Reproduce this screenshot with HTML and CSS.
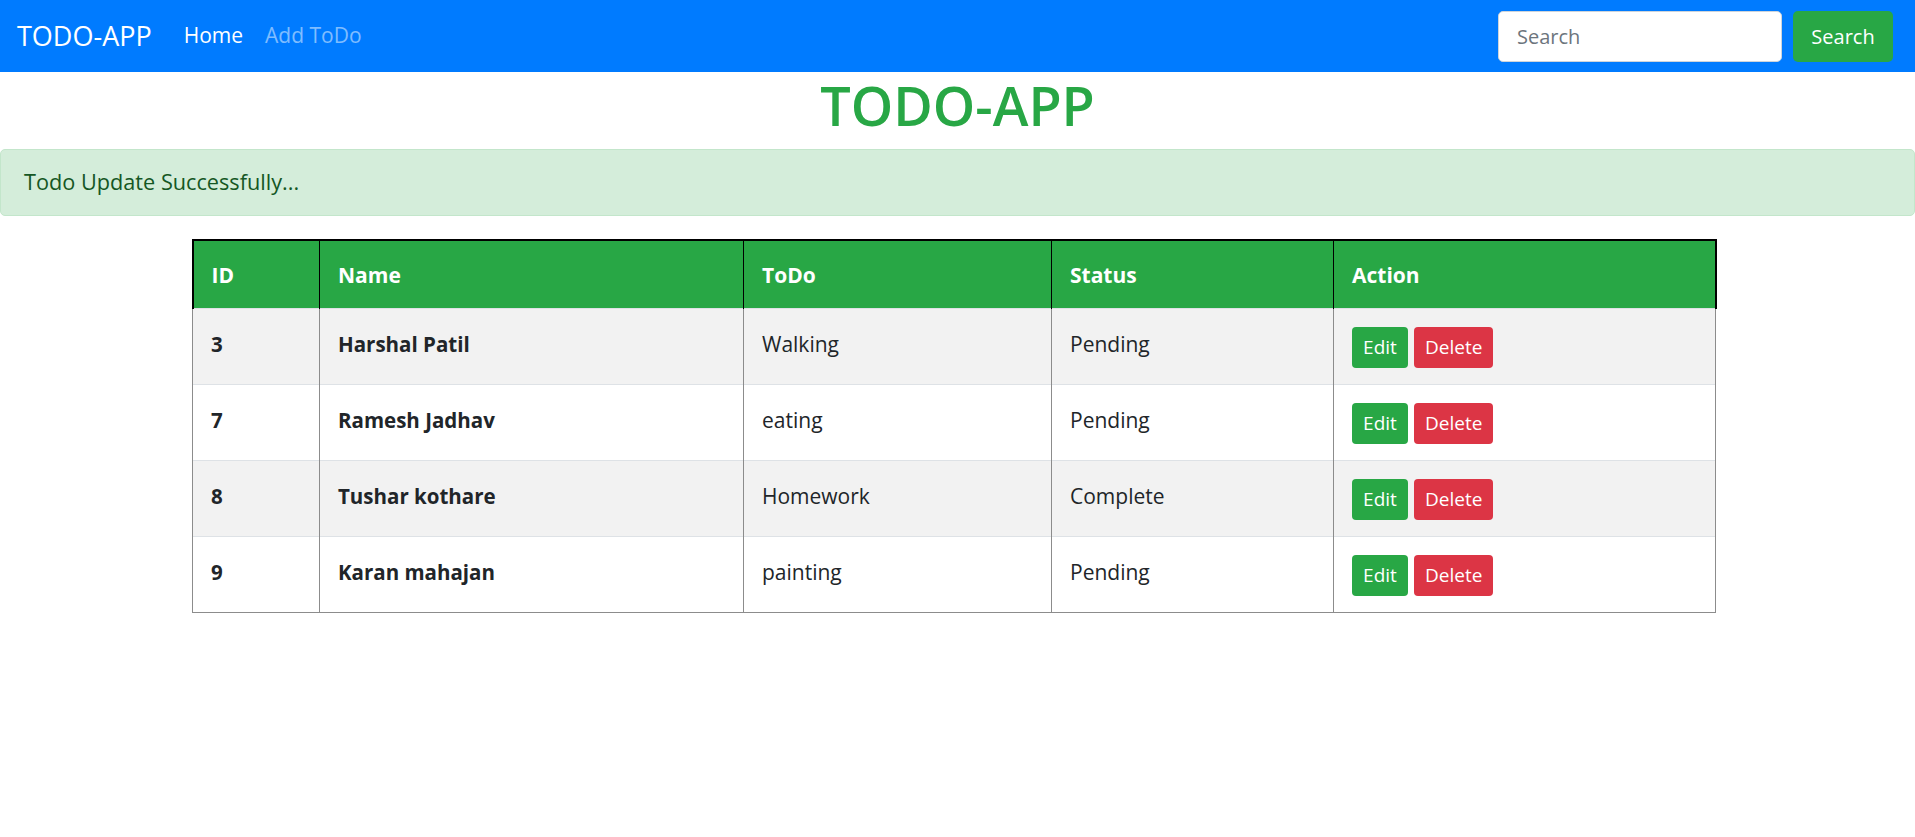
FILE: index.html
```html
<!DOCTYPE html>
<html lang="en">
<head>
<meta charset="utf-8">
<title>TODO-APP</title>
<link rel="stylesheet" href="styles.css">
</head>
<body>
<nav class="navbar">
  <a class="brand" href="#">TODO-APP</a>
  <ul class="nav">
    <li><a class="nav-link active" href="#">Home</a></li>
    <li><a class="nav-link" href="#">Add ToDo</a></li>
  </ul>
  <form class="search">
    <input class="search-input" type="search" placeholder="Search">
    <button class="btn-search" type="button">Search</button>
  </form>
</nav>
<h1 class="title">TODO-APP</h1>
<div class="alert">Todo Update Successfully...</div>
<table class="todo-table">
  <thead>
    <tr><th class="c-id">ID</th><th class="c-name">Name</th><th class="c-todo">ToDo</th><th class="c-status">Status</th><th class="c-action">Action</th></tr>
  </thead>
  <tbody>
    <tr class="odd"><th>3</th><th>Harshal Patil</th><td>Walking</td><td>Pending</td><td><button class="btn btn-edit">Edit</button><button class="btn btn-delete">Delete</button></td></tr>
    <tr><th>7</th><th>Ramesh Jadhav</th><td>eating</td><td>Pending</td><td><button class="btn btn-edit">Edit</button><button class="btn btn-delete">Delete</button></td></tr>
    <tr class="odd"><th>8</th><th>Tushar kothare</th><td>Homework</td><td>Complete</td><td><button class="btn btn-edit">Edit</button><button class="btn btn-delete">Delete</button></td></tr>
    <tr><th>9</th><th>Karan mahajan</th><td>painting</td><td>Pending</td><td><button class="btn btn-edit">Edit</button><button class="btn btn-delete">Delete</button></td></tr>
  </tbody>
</table>
</body>
</html>
```
FILE: styles.css
```css
* { box-sizing: border-box; }
body {
  margin: 0;
  font-family: "Open Sans", "Noto Sans", sans-serif;
  font-size: 21px;
  line-height: 1.5;
  color: #212529;
  background: #fff;
}
.navbar {
  display: flex;
  align-items: center;
  height: 72px;
  padding: 0 22px 0 17px;
  background: #007bff;
}
.brand {
  color: #fff;
  text-decoration: none;
  font-size: 27px;
  margin-right: 21px;
}
.nav {
  display: flex;
  list-style: none;
  margin: 0;
  padding: 0;
}
.nav-link {
  display: block;
  padding: 0 11px;
  color: rgba(255,255,255,.5);
  text-decoration: none;
  font-size: 21px;
}
.nav-link.active { color: #fff; }
.search {
  margin-left: auto;
  display: flex;
  gap: 11px;
}
.search-input {
  width: 284px;
  height: 51px;
  border: 1px solid #ced4da;
  border-radius: 5px;
  padding: 0 18px;
  font-family: inherit;
  font-size: 20px;
  color: #495057;
}
.search-input::placeholder { color: #6c757d; }
.btn-search {
  width: 100px;
  height: 51px;
  border: none;
  border-radius: 5px;
  background: #28a745;
  color: #fff;
  font-family: inherit;
  font-size: 20px;
}
.title {
  margin: 0 0 12px;
  height: 65px;
  line-height: 67px;
  text-align: center;
  font-size: 54px;
  font-weight: 600;
  color: #28a745;
}
.alert {
  display: flex;
  align-items: center;
  height: 67px;
  margin-bottom: 23px;
  padding: 0 23px 0 23px;
  background: #d4edda;
  border: 1px solid #c3e6cb;
  border-radius: 5px;
  color: #155724;
  font-size: 21.7px;
}
.todo-table {
  width: 1525px;
  margin: 0 0 0 10%;
  border-collapse: collapse;
}
.todo-table thead th {
  height: 68px;
  padding: 3px 18px 0;
  background: #28a745;
  color: #fff;
  font-weight: 700;
  font-size: 21px;
  text-align: left;
  vertical-align: middle;
  border-top: 2px solid #000;
  border-left: 1px solid #000;
  border-right: 1px solid #000;
}
.todo-table thead th:first-child { border-left-width: 2px; }
.todo-table thead th:last-child { border-right-width: 2px; }
.c-id { width: 127px; }
.c-name { width: 424px; }
.c-todo { width: 308px; }
.c-status { width: 282px; }
.todo-table tbody th,
.todo-table tbody td {
  height: 76px;
  padding: 18px 18px 0;
  vertical-align: top;
  text-align: left;
  font-size: 21px;
  line-height: 34px;
  border-left: 1px solid #8c8c8c;
  border-right: 1px solid #8c8c8c;
  border-top: 1px solid #dee2e6;
}
.todo-table tbody th { font-weight: 700; font-size: 20.5px; }
.todo-table tbody tr:last-child th,
.todo-table tbody tr:last-child td { border-bottom: 1px solid #8c8c8c; }
.todo-table tbody tr.odd { background: #f2f2f2; }
.todo-table tbody td:last-child { padding-top: 18px; }
.btn {
  display: inline-block;
  height: 41px;
  padding: 0 11px;
  border: none;
  border-radius: 4px;
  color: #fff;
  font-family: inherit;
  font-size: 19px;
  line-height: 41px;
  vertical-align: top;
}
.btn-edit { background: #28a745; margin-right: 6px; min-width: 56px; }
.btn-delete { background: #dc3545; min-width: 79px; }
```
